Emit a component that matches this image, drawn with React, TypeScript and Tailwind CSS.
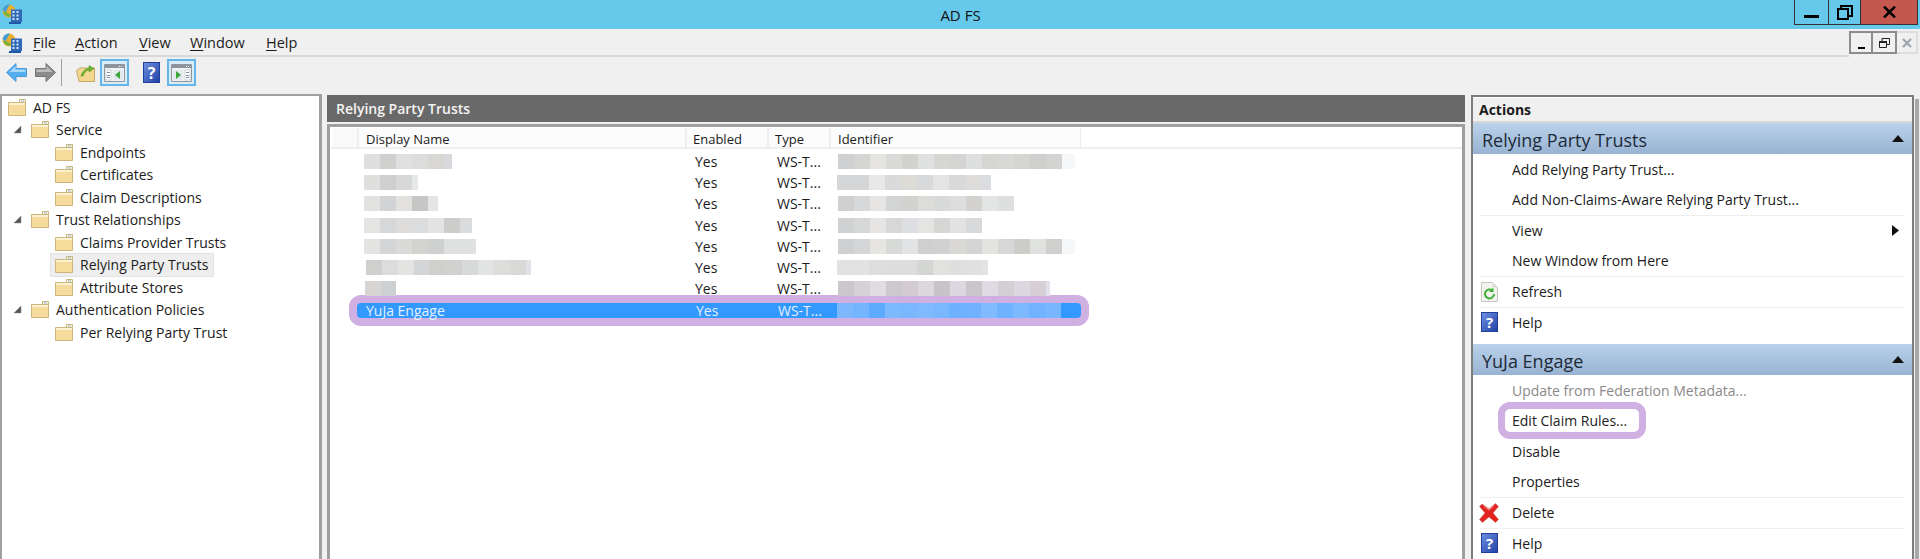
function Folder() {
  return (
    <svg width="18" height="17" viewBox="0 0 18 17" className="shrink-0">
      <path d="M0.5 3.5h17v13h-17z" fill="#f6dc9c" stroke="#cdb57c" />
      <path d="M1 4h16v2H1z" fill="#fdf2cf" />
      <path d="M11.5 0.5h6v3h-6z" fill="#fbf3d8" stroke="#c9b57f" />
      <path d="M13 1.5h3v1h-3z" fill="#8fc1e0" />
    </svg>
  );
}

function AppIcon() {
  return (
    <svg width="21" height="20" viewBox="0 0 21 20" className="shrink-0">
      <circle cx="7" cy="7" r="6.5" fill="#e8b030" />
      <path d="M1 4.500C2.500 1.500 5.500 0 8 .5 6.500 2.500 5 4.500 4 8L1 7z" fill="#3f9fdb" />
      <path d="M1 8.500c1.500 2.500 3.500 4 6 4.500l2-2-5-3z" fill="#78b23a" />
      <path d="M9 5.500h11v12.500H9z" fill="#2f69b8" />
      <path d="M10.500 7h2v2h-2zM14.500 7h2v2h-2zM10.500 10.500h2v2h-2zM14.500 10.500h2v2h-2zM10.500 14h2v2h-2zM14.500 14h2v2h-2z" fill="#d7e6f6" />
      <path d="M7 18h12v2H7z" fill="#1f57a8" />
    </svg>
  );
}

function BackArrow() {
  return (
    <svg width="21" height="19" viewBox="0 0 21 19">
      <path d="M.5 9.500 10 .5v5h10.500v8H10v5z" fill="#55aef0" stroke="#4a9ad8" />
      <path d="M3 9.500 9.500 3v3.500h10V9H3z" fill="#a6d8fa" />
    </svg>
  );
}

function ForwardArrow() {
  return (
    <svg width="21" height="19" viewBox="0 0 21 19">
      <path d="M20.500 9.500 11 .5v5H.5v8H11v5z" fill="#8c8c8c" stroke="#777777" />
      <path d="M18 9.500 11.500 3v3.500h-10V9H18z" fill="#bdbdbd" />
    </svg>
  );
}

function UpFolder() {
  return (
    <svg width="19" height="19" viewBox="0 0 19 19">
      <path d="M.5 7.500 4 5h14.500v13.500H3z" fill="#f3d68f" stroke="#c3a966" />
      <path d="M5 13c1-4 4-7 8-8V2.500L18 5.500 13 9V6.500c-3 1-5 3.500-6 6.500z" fill="#6db52e" stroke="#4e8f1e" strokeWidth=".5" />
    </svg>
  );
}

function PaneIcon({ side }: { side: "left" | "right" }) {
  return (
    <span className="flex h-[27px] w-[29px] items-center justify-center border-2 border-[#66b5e8] bg-[#d9ecf9]">
      <svg width="21" height="18" viewBox="0 0 21 18">
        <path d="M.5 .5h20v17H.5z" fill="#f2f2f2" stroke="#8f979e" />
        <path d="M1 1h19v3H1z" fill="#8b949c" />
        <path d="M15 2h1v1h-1zM17 2h1v1h-1z" fill="#ffffff" />
        {side === "left" ? (
          <>
            <path d="M2 6h5v10H2z" fill="#ffffff" stroke="#aab3ba" strokeWidth=".5" />
            <path d="M3 8h3v1H3zM3 11h3v1H3zM3 13h3v1H3z" fill="#7890a8" />
            <path d="M9 6h10v10H9z" fill="#e3e8ec" />
            <path d="M16 7v8l-5-4z" fill="#38a838" />
          </>
        ) : (
          <>
            <path d="M14 6h5v10h-5z" fill="#ffffff" stroke="#aab3ba" strokeWidth=".5" />
            <path d="M15 8h3v1h-3zM15 11h3v1h-3zM15 13h3v1h-3z" fill="#7890a8" />
            <path d="M2 6h10v10H2z" fill="#e3e8ec" />
            <path d="M5 7v8l5-4z" fill="#38a838" />
          </>
        )}
      </svg>
    </span>
  );
}

function HelpBook({ className }: { className: string }) {
  return (
    <span
      className={
        "flex items-center justify-center border border-[#1f3f9a] bg-gradient-to-br from-[#6f8fe0] to-[#2242a8] font-bold text-white " +
        className
      }
    >
      ?
    </span>
  );
}

function RefreshIcon() {
  return (
    <svg width="17" height="20" viewBox="0 0 17 20">
      <path d="M.5 .5h11l5 5v14H.5z" fill="#f3f3ee" stroke="#c6c6c0" />
      <path d="M11.500 .5v5h5z" fill="#dedfd8" />
      <path d="M13 12a4.500 4.500 0 1 1-1.500-3.400" fill="none" stroke="#3fb03a" strokeWidth="2" />
      <path d="M12.500 5.500V10H8z" fill="#3fb03a" />
    </svg>
  );
}

function DeleteIcon() {
  return (
    <svg width="20" height="20" viewBox="0 0 20 20" className="-ml-[2px]">
      <path d="M3 1 10 6 16.500 .5 19.500 3.500 14 10l5.500 6.500-3 3L10 14l-6.500 5.500-3-3L6 10 .5 3.500z" fill="#e2231f" stroke="#c9605c" strokeWidth=".5" />
      <path d="M3.500 2.500 10 7.500 16.500 2 10 5.500z" fill="#f58a84" />
    </svg>
  );
}

const treeItems = [
  { label: "AD FS", indent: "pl-[4px]", arrow: false },
  { label: "Service", indent: "pl-[11px]", arrow: true },
  { label: "Endpoints", indent: "pl-[51px]", arrow: false },
  { label: "Certificates", indent: "pl-[51px]", arrow: false },
  { label: "Claim Descriptions", indent: "pl-[51px]", arrow: false },
  { label: "Trust Relationships", indent: "pl-[11px]", arrow: true },
  { label: "Claims Provider Trusts", indent: "pl-[51px]", arrow: false },
  { label: "Relying Party Trusts", indent: "pl-[51px]", arrow: false, active: true },
  { label: "Attribute Stores", indent: "pl-[51px]", arrow: false },
  { label: "Authentication Policies", indent: "pl-[11px]", arrow: true },
  { label: "Per Relying Party Trust", indent: "pl-[51px]", arrow: false },
];

function Tree() {
  return (
    <aside className="flex w-[322px] shrink-0 flex-col border-2 border-r-[3px] border-b-0 border-[#a0a0a0] bg-white">
      {treeItems.map((item) => (
        <div key={item.label} className={"flex h-[22.5px] items-center " + item.indent}>
          {item.arrow && (
            <svg width="9" height="9" viewBox="0 0 9 9" className="mr-[7px] shrink-0">
              <path d="M8 1v7H1z" fill="#555555" stroke="#888888" strokeWidth=".5" />
            </svg>
          )}
          <span
            className={
              "flex h-[22px] items-center gap-[7px] pr-[5px] " +
              (item.active ? "-ml-[2px] bg-[#eeeeee] pl-[4px] outline outline-1 outline-[#e2e2e2]" : "pl-[2px]")
            }
          >
            <Folder />
            <span>{item.label}</span>
          </span>
        </div>
      ))}
    </aside>
  );
}

type BlurRow = { name: string[]; nameTail: string; nameClass: string; id: string[]; idTail: string; idClass: string };

const blurRows: BlurRow[] = [
  {
    name: ["bg-[#dfdfdf]", "bg-[#d0d0ce]", "bg-[#dfe0df]", "bg-[#dcdcdc]", "bg-[#d8d7d4]"],
    nameTail: "w-[8px] bg-[#d7d9dc]",
    nameClass: "pl-[4px]",
    id: ["bg-[#cfd0d1]", "bg-[#d5d6d4]", "bg-[#e5e4e1]", "bg-[#dadbd9]", "bg-[#d2d2ce]", "bg-[#dfe1e0]", "bg-[#d6d6d3]", "bg-[#d4d4d2]", "bg-[#dedfdf]", "bg-[#d6d6d3]", "bg-[#d8d9d7]", "bg-[#d5d5d1]", "bg-[#cfcfcd]", "bg-[#d3d3d1]"],
    idTail: "w-[13px] bg-[#f6f7f9]",
    idClass: "pl-[5px]",
  },
  {
    name: ["bg-[#dfdfdd]", "bg-[#cfcfcf]", "bg-[#d8d8d8]"],
    nameTail: "w-[6px] bg-[#e6e9ea]",
    nameClass: "pl-[4px]",
    id: ["bg-[#d5d6d7]", "bg-[#d5d6d7]", "bg-[#e8e8e8]", "bg-[#d9dad9]", "bg-[#dcdbd6]", "bg-[#d7d9db]", "bg-[#e4e4e4]", "bg-[#d9d9da]", "bg-[#dddcdb]"],
    idTail: "w-[10px] bg-[#dcdde0]",
    idClass: "pl-[4px]",
  },
  {
    name: ["bg-[#e2e2e0]", "bg-[#d2d3d5]", "bg-[#e2e1de]", "bg-[#c6c6c6]"],
    nameTail: "w-[10px] bg-[#e5e5e5]",
    nameClass: "pl-[4px]",
    id: ["bg-[#d0d0d1]", "bg-[#d6d8da]", "bg-[#e6e5e3]", "bg-[#d3d5d4]", "bg-[#d2d2cf]", "bg-[#dcdcd9]", "bg-[#d8d9d9]", "bg-[#dddddd]", "bg-[#d3d2cf]", "bg-[#e3e5e4]"],
    idTail: "w-4 bg-[#dee0df]",
    idClass: "pl-[5px]",
  },
  {
    name: ["bg-[#e4e4e2]", "bg-[#d6d7d9]", "bg-[#dddcdb]", "bg-[#dbdcdd]", "bg-[#e2e3e2]", "bg-[#cdcdcb]"],
    nameTail: "w-[12px] bg-[#dadbdd]",
    nameClass: "pl-[4px]",
    id: ["bg-[#d0d1d2]", "bg-[#d6d8d7]", "bg-[#e6e5e3]", "bg-[#d6d7d6]", "bg-[#dcdee1]", "bg-[#e4e4e2]", "bg-[#d6d7d4]", "bg-[#e2e2e2]"],
    idTail: "w-4 bg-[#d7d9db]",
    idClass: "pl-[5px]",
  },
  {
    name: ["bg-[#e3e3e1]", "bg-[#d4d5d7]", "bg-[#dadad8]", "bg-[#d3d3d0]", "bg-[#cfd0d0]", "bg-[#dfe1e0]"],
    nameTail: "w-4 bg-[#dfe1e0]",
    nameClass: "pl-[4px]",
    id: ["bg-[#cfd0d1]", "bg-[#d5d6d8]", "bg-[#e6e5e2]", "bg-[#d8dad8]", "bg-[#e2e3e5]", "bg-[#cfcfcf]", "bg-[#d1d1d1]", "bg-[#d9d8d5]", "bg-[#d3d4d3]", "bg-[#e3e3df]", "bg-[#d6d7d6]", "bg-[#cdcdca]", "bg-[#e0e2e0]", "bg-[#cfcfce]"],
    idTail: "w-[13px] bg-[#f6f7f9]",
    idClass: "pl-[5px]",
  },
  {
    name: ["bg-[#cfcfce]", "bg-[#dcdcdc]", "bg-[#e3e3e1]", "bg-[#d3d5d7]", "bg-[#cfcfcc]", "bg-[#d1d1d0]", "bg-[#d8d9d9]", "bg-[#e2e3e3]", "bg-[#dddedc]", "bg-[#d9d9d7]"],
    nameTail: "w-[5px] bg-[#dfe3e7]",
    nameClass: "pl-[6px]",
    id: ["bg-[#e2e2e2]", "bg-[#e2e2e2]", "bg-[#dddedd]", "bg-[#dcdddc]", "bg-[#dcdddc]", "bg-[#d4d6d4]", "bg-[#e1e1dd]", "bg-[#dfdfdf]", "bg-[#dfe0df]"],
    idTail: "w-[7px] bg-[#e3e3e3]",
    idClass: "pl-[4px]",
  },
  {
    name: ["bg-[#d6d5d3]"],
    nameTail: "w-[15px] bg-[#cfd0d2]",
    nameClass: "pl-[5px]",
    id: ["bg-[#cbc8cd]", "bg-[#d4d1d7]", "bg-[#e1dce2]", "bg-[#cbc9cd]", "bg-[#d2ccd2]", "bg-[#dcd7dd]", "bg-[#c6c3c9]", "bg-[#dcd8df]", "bg-[#cac5ca]", "bg-[#dfdbe2]", "bg-[#d3d0d5]", "bg-[#dcd8df]", "bg-[#d6d0d6]"],
    idTail: "w-[4px] bg-[#e2e0ea]",
    idClass: "pl-[5px]",
  },
];

function Blur({ cells, tail, className }: { cells: string[]; tail: string; className: string }) {
  return (
    <div className={"flex h-[15px] " + className}>
      {cells.map((cell, i) => (
        <span key={i} className={"w-4 " + cell} />
      ))}
      <span className={tail} />
    </div>
  );
}

const highlightCells = ["bg-[#7db8ff]", "bg-[#75b4ff]", "bg-[#5eaaff]", "bg-[#7db9ff]", "bg-[#7ab7ff]", "bg-[#7fbaff]", "bg-[#79b7ff]", "bg-[#6db1ff]", "bg-[#70b2ff]", "bg-[#80bbff]", "bg-[#6fb2ff]", "bg-[#7db9ff]", "bg-[#71b3ff]", "bg-[#78b6ff]"];

function TrustsTable() {
  return (
    <div className="mt-[2px] flex min-h-0 flex-1 flex-col border-[3px] border-b-0 border-[#9f9f9f] bg-white pl-[1px] pt-[1px]">
      <div className="flex h-[21px] shrink-0 border-b-2 border-[#eeeeee] text-[13px] leading-[23px]">
        <div className="ml-[2px] w-[26px] border-r-2 border-[#eeeeee] bg-[#fafafa]" />
        <div className="w-[328px] border-r-2 border-[#eeeeee] bg-[#fcfcfc] pl-[7px]">Display Name</div>
        <div className="w-[82px] border-r-2 border-[#eeeeee] bg-[#fcfcfc] pl-[6px]">Enabled</div>
        <div className="w-[62px] border-r-2 border-[#eeeeee] bg-[#fcfcfc] pl-[6px]">Type</div>
        <div className="w-[250px] border-r border-[#eeeeee] bg-[#fcfcfc] pl-[7px]">Identifier</div>
      </div>
      <div className="pt-[2px] text-[14px]">
        {blurRows.map((row, i) => (
          <div key={i} className="flex h-[21.2px] items-center pl-[29px]">
            <div className="w-[335px]">
              <Blur cells={row.name} tail={row.nameTail} className={row.nameClass} />
            </div>
            <div className="w-[82px]">Yes</div>
            <div className="w-[56px]">WS-T...</div>
            <Blur cells={row.id} tail={row.idTail} className={row.idClass} />
          </div>
        ))}
        {/* selected row with the purple annotation round it */}
        <div className="ml-[18px] mt-[-4px] flex h-[31px] w-[740px] items-center rounded-[12px] border-[8px] border-[#d0b0e2] bg-[#3399ff] pl-[1px] text-[#e4f0ff]">
          <div className="w-[338px] pl-[8px]">YuJa Engage</div>
          <div className="w-[82px]">Yes</div>
          <div className="w-[59px]">WS-T...</div>
          <Blur cells={highlightCells} tail="w-0" className="h-[15px]" />
        </div>
      </div>
    </div>
  );
}

type ActionItem = { label: string; icon?: "refresh" | "help" | "delete"; rule?: boolean; disabled?: boolean; submenu?: boolean; ring?: boolean };

function ActionRow({ item }: { item: ActionItem }) {
  return (
    <div className={"mx-[7px] flex h-[30.5px] items-center pl-[1px] pr-[6px] " + (item.rule ? "border-t border-[#efefef]" : "")}>
      <span className="flex w-[31px] shrink-0 items-center">
        {item.icon === "refresh" && <RefreshIcon />}
        {item.icon === "help" && <HelpBook className="h-[20px] w-[17px] text-[15px]" />}
        {item.icon === "delete" && <DeleteIcon />}
      </span>
      {item.ring ? (
        <span className="-ml-[14px] flex h-[37px] items-center rounded-[12px] border-[7px] border-[#d0b0e2] pl-[7px] pr-[12px] text-[#222222]">{item.label}</span>
      ) : (
        <span className={item.disabled ? "text-[#8a8a8a]" : ""}>{item.label}</span>
      )}
      {item.submenu && (
        <svg width="7" height="11" viewBox="0 0 7 11" className="ml-auto">
          <path d="M0 0l7 5.500L0 11z" fill="#111111" />
        </svg>
      )}
    </div>
  );
}

function ActionGroup({ title, items }: { title: string; items: ActionItem[] }) {
  return (
    <section className="pb-[7px]">
      <div className="flex h-[31px] items-center justify-between bg-gradient-to-b from-[#bad2ea] to-[#98b3d2] pl-[9px] pr-[8px] pt-[3px] text-[18px] text-[#1d2a38]">
        <span>{title}</span>
        <svg width="12" height="7" viewBox="0 0 12 7" className="-mt-[3px]">
          <path d="M6 0l6 7H0z" fill="#111111" />
        </svg>
      </div>
      {items.map((item) => (
        <ActionRow key={item.label} item={item} />
      ))}
    </section>
  );
}

const menuItems = [
  { key: "F", rest: "ile", width: "w-[42px]" },
  { key: "A", rest: "ction", width: "w-[64px]" },
  { key: "V", rest: "iew", width: "w-[51px]" },
  { key: "W", rest: "indow", width: "w-[76px]" },
  { key: "H", rest: "elp", width: "w-[40px]" },
];

export default function App() {
  return (
    <div className="flex h-[559px] w-[1920px] flex-col overflow-hidden bg-[#f0f0f0] font-['Open_Sans','Noto_Sans',sans-serif] text-[14px] text-[#1b1b1b]">
      {/* title bar */}
      <header className="relative flex h-[29px] shrink-0 items-start justify-center bg-[#66c9ec] pl-[1px]">
        <span className="absolute left-[2px] top-[4px]">
          <AppIcon />
        </span>
        <span className="pt-[5px] text-[15px] leading-[20px] text-[#111111]">AD FS</span>
        <div className="absolute right-[2px] top-0 flex h-[25px] border-x border-b border-[#333333]">
          <button className="flex w-[34px] items-end justify-center border-r border-[#333333] pb-[6px]">
            <span className="h-[3px] w-[15px] bg-black" />
          </button>
          <button className="flex w-[32px] items-center justify-center border-r border-[#333333]">
            <svg width="16" height="15" viewBox="0 0 16 15">
              <path d="M1 4h10v10H1zM4 4V1h11v10h-4" fill="none" stroke="#000000" strokeWidth="2" />
            </svg>
          </button>
          <button className="flex w-[56px] items-center justify-center bg-[#c4574f]">
            <svg width="13" height="12" viewBox="0 0 13 12">
              <path d="M1 .5 12 11.500M12 .5 1 11.500" stroke="#000000" strokeWidth="2.500" />
            </svg>
          </button>
        </div>
      </header>

      {/* menu bar */}
      <nav className="flex h-[28px] shrink-0 items-center">
        <div className="flex h-full flex-1 items-center border-b-2 border-[#d9d9d9] pl-[2px] pt-[1px]">
          <span className="mr-[10px]">
            <AppIcon />
          </span>
          {menuItems.map((item) => (
            <span key={item.key} className={"text-[14.5px] " + item.width}>
              <span className="underline underline-offset-2">{item.key}</span>
              {item.rest}
            </span>
          ))}
        </div>
        <div className="flex h-full items-start pt-[2px]">
          <span className="flex h-[23px] w-[24px] items-end justify-center border-2 border-[#8c8c8c] pb-[3px]">
            <span className="h-[2px] w-[7px] bg-black" />
          </span>
          <span className="flex h-[23px] w-[24px] items-center justify-center border-2 border-l-0 border-[#8c8c8c]">
            <svg width="11" height="10" viewBox="0 0 11 10">
              <path d="M.5 3.500h7v6h-7zM3 3V.5h7.500v6H8" fill="none" stroke="#222222" />
              <path d="M0 3h8v2H0z" fill="#222222" />
            </svg>
          </span>
          <span className="mr-[2px] flex h-[23px] w-[21px] items-center justify-center border-2 border-l-0 border-[#dddddd]">
            <svg width="10" height="10" viewBox="0 0 10 10">
              <path d="M1 1l8 8M9 1l-8 8" stroke="#9aa5ae" strokeWidth="2.200" />
            </svg>
          </span>
        </div>
      </nav>

      {/* toolbar */}
      <div className="h-[37px] shrink-0 pl-[6px] pt-[2px]">
        <div className="flex h-[27px] items-center">
          <BackArrow />
          <span className="ml-[8px]">
            <ForwardArrow />
          </span>
          <span className="ml-[5px] h-[27px] w-[1px] bg-[#a0a0a0]" />
          <span className="ml-[14px]">
            <UpFolder />
          </span>
          <span className="ml-[5px]">
            <PaneIcon side="left" />
          </span>
          <HelpBook className="ml-[14px] h-[21px] w-[17px] text-[16px]" />
          <span className="ml-[7px]">
            <PaneIcon side="right" />
          </span>
        </div>
      </div>

      {/* panes */}
      <main className="flex min-h-0 flex-1">
        <Tree />
        <div className="ml-[5px] flex w-[1138px] shrink-0 flex-col pt-[1px]">
          <h2 className="flex h-[27px] shrink-0 items-center bg-[#696969] pl-[9px] text-[14px] font-semibold text-[#f4f4f4]">Relying Party Trusts</h2>
          <TrustsTable />
        </div>
        <div className="ml-[6px] mt-[1px] flex w-[443px] shrink-0 flex-col border-[2px] border-b-0 border-[#7d7d7d] bg-white pt-[1px]">
          <h3 className="flex h-[25px] shrink-0 items-center border-b-2 border-[#d6d6d6] bg-[#f0f0f0] pl-[6px] text-[14px] font-bold">Actions</h3>
          <ActionGroup
            title="Relying Party Trusts"
            items={[
              { label: "Add Relying Party Trust..." },
              { label: "Add Non-Claims-Aware Relying Party Trust..." },
              { label: "View", rule: true, submenu: true },
              { label: "New Window from Here" },
              { label: "Refresh", rule: true, icon: "refresh" },
              { label: "Help", rule: true, icon: "help" },
            ]}
          />
          <ActionGroup
            title="YuJa Engage"
            items={[
              { label: "Update from Federation Metadata...", disabled: true },
              { label: "Edit Claim Rules...", ring: true },
              { label: "Disable" },
              { label: "Properties" },
              { label: "Delete", rule: true, icon: "delete" },
              { label: "Help", rule: true, icon: "help" },
            ]}
          />
        </div>
        <div className="ml-[1px] mt-[5px] w-[4px] bg-[#a8a8a8]" />
      </main>
    </div>
  );
}
